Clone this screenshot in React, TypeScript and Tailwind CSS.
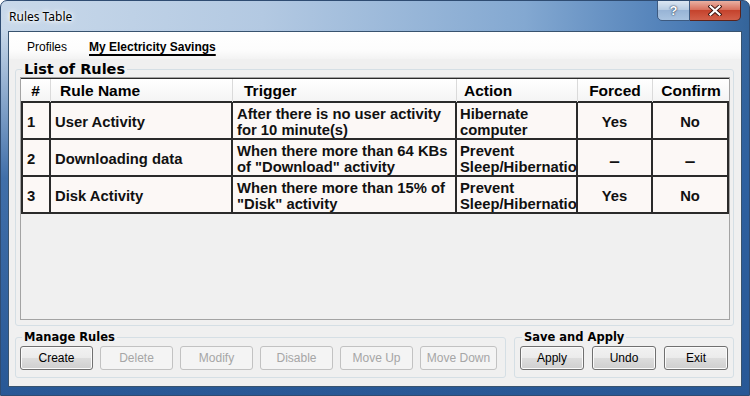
import type { ReactNode } from 'react';

interface Rule {
    id: number;
    name: string;
    trigger: string[];
    action: string[];
    forced: string;
    confirm: string;
}

const rules: Rule[] = [
    { id: 1, name: 'User Activity', trigger: ['After there is no user activity', 'for 10 minute(s)'], action: ['Hibernate', 'computer'], forced: 'Yes', confirm: 'No' },
    { id: 2, name: 'Downloading data', trigger: ['When there more than 64 KBs', 'of "Download" activity'], action: ['Prevent', 'Sleep/Hibernation'], forced: '–', confirm: '–' },
    { id: 3, name: 'Disk Activity', trigger: ['When there more than 15% of', '"Disk" activity'], action: ['Prevent', 'Sleep/Hibernation'], forced: 'Yes', confirm: 'No' },
];

const cols = 'grid grid-cols-[30px_182px_224px_121px_75px_76px]';
const groupLabel = "font-['DejaVu_Sans',sans-serif] font-bold text-black";

function WinButton({ children, disabled, className }: { children: ReactNode; disabled?: boolean; className: string }) {
    return (
        <div
            className={`${className} h-[24px] flex items-center justify-center rounded-[3px] border text-[12px] ${disabled
                ? 'border-[#c2c2c2] bg-[#f4f4f4] text-[#a6a6a6]'
                : 'border-[#707070] bg-[linear-gradient(to_bottom,#f2f2f2_0%,#ebebeb_50%,#dddddd_51%,#cfcfcf_100%)] text-black shadow-[inset_0_0_0_1px_#fbfbfb]'
                }`}
        >
            {children}
        </div>
    );
}

// yes / no / dash cell
function Flag({ value }: { value: string }) {
    if (value === '–') return <span className="text-[19px] leading-none mt-[3px]">–</span>;
    return <span>{value}</span>;
}

export default function App() {
    return (
        <div className="w-[750px] h-[396px] flex flex-col border border-[#2f4c72] rounded-t-[7px] overflow-hidden font-['Liberation_Sans',Arial,sans-serif] bg-[linear-gradient(to_bottom,rgba(42,92,155,0)_7%,rgba(45,96,160,0.88)_45%,#285896_100%),linear-gradient(to_right,#c9d9ea_0%,#b3c9e2_35%,#83a8d1_70%,#4a7bb5_92%,#34649a_100%)]">
            {/* title bar */}
            <div className="h-[30px] flex items-start justify-between">
                <span className="ml-[8px] mt-[8px] text-[12px] leading-[15px] text-black font-['Noto_Sans',sans-serif] [text-shadow:0_0_8px_#fff,0_0_5px_#fff,0_0_3px_#fff]">
                    Rules Table
                </span>
                <div className="flex mr-[8px] -mt-px">
                    <div className="w-[33px] h-[21px] flex items-center justify-center border border-[#3d5a80] rounded-bl-[5px] bg-[linear-gradient(to_bottom,#dbe6f2_0%,#b9cde3_45%,#98b4d6_50%,#a9c3e0_100%)]">
                        <span className="text-[13px] leading-none font-bold text-white [text-shadow:0_0_2px_#243a58,0_0_1px_#243a58]">?</span>
                    </div>
                    <div className="w-[51px] h-[21px] flex items-center justify-center border border-l-0 border-[#5b231b] rounded-br-[5px] bg-[linear-gradient(to_bottom,#e9b0a2_0%,#d8725f_45%,#c5432d_50%,#d2604a_100%)]">
                        <svg width="14" height="11" viewBox="0 0 14 11">
                            <path d="M2.5 1.5 L11.5 9.5 M11.5 1.5 L2.5 9.5" stroke="#3d1510" strokeWidth="4" strokeLinecap="square" fill="none" />
                            <path d="M2.5 1.5 L11.5 9.5 M11.5 1.5 L2.5 9.5" stroke="#ffffff" strokeWidth="2.2" strokeLinecap="square" fill="none" />
                        </svg>
                    </div>
                </div>
            </div>

            {/* client area */}
            <div className="flex-1 mx-[7px] mb-[8px] flex flex-col border border-[#38536f] bg-[#f0f0f0]">
                <div className="h-[27px] flex items-center pl-[18px] gap-[22px] text-[12px] text-black bg-[linear-gradient(to_bottom,#ffffff,#fcfcfc_70%,#f3f3f3)]">
                    <span className="mt-[2px]">Profiles</span>
                    <span className="mt-[2px] font-bold underline underline-offset-[3px] decoration-[1.5px]">My Electricity Savings</span>
                </div>

                <div className="flex flex-col pl-[6px] pr-[7px] pt-[2px]">
                    <fieldset className="border border-[#d5dfe5] rounded-[3px]">
                        <legend className={`ml-[6px] px-[2px] text-[14.5px] leading-[16px] ${groupLabel}`}>List of Rules</legend>
                        <div className="ml-[4px] mr-[3px] mb-[5px] h-[243px] border border-[#a3a3a3] bg-[#f0f0f0]">
                            <div className={`${cols} h-[25px] border-t border-b-2 border-[#2a2a2a] bg-[linear-gradient(to_bottom,#ffffff,#f4f4f4)] text-[15.5px] font-bold text-black`}>
                                <div className="flex items-center justify-center border-r border-[#dadada]">#</div>
                                <div className="flex items-center pl-[9px] border-r border-[#dadada]">Rule Name</div>
                                <div className="flex items-center pl-[11px] border-r border-[#dadada]">Trigger</div>
                                <div className="flex items-center pl-[7px] border-r border-[#dadada]">Action</div>
                                <div className="flex items-center justify-center border-r border-[#dadada]">Forced</div>
                                <div className="flex items-center justify-center">Confirm</div>
                            </div>
                            {rules.map((rule) => (
                                <div key={rule.id} className={`${cols} h-[37px] border-b-2 border-[#2a2a2a] bg-[#fcf8f6] text-[14.8px] leading-[16px] font-bold text-[#111]`}>
                                    <div className="flex items-center pl-[4px] pt-[3px] border-l-2 border-r-2 border-[#2a2a2a]">{rule.id}</div>
                                    <div className="flex items-center pl-[4px] pt-[3px] border-r-2 border-[#2a2a2a]">{rule.name}</div>
                                    <div className="flex flex-col justify-center pl-[4px] pt-[3px] border-r-2 border-[#2a2a2a] overflow-hidden whitespace-nowrap">
                                        {rule.trigger.map((line) => <span key={line}>{line}</span>)}
                                    </div>
                                    <div className="flex flex-col justify-center pl-[3px] pt-[3px] border-r-2 border-[#2a2a2a] overflow-hidden whitespace-nowrap">
                                        {rule.action.map((line) => <span key={line}>{line}</span>)}
                                    </div>
                                    <div className="flex items-center justify-center pt-[3px] border-r-2 border-[#2a2a2a]"><Flag value={rule.forced} /></div>
                                    <div className="flex items-center justify-center pt-[3px] border-r-2 border-[#2a2a2a]"><Flag value={rule.confirm} /></div>
                                </div>
                            ))}
                        </div>
                    </fieldset>

                    <div className="mt-[4px] flex gap-[8px]">
                        <fieldset className="w-[491px] border border-[#d5dfe5] rounded-[3px]">
                            <legend className={`ml-[6px] px-[2px] text-[11.5px] leading-[14px] ${groupLabel}`}>Manage Rules</legend>
                            <div className="flex gap-[7px] pl-[4px] pt-[2px] pb-[7px]">
                                <WinButton className="w-[73px]">Create</WinButton>
                                <WinButton className="w-[73px]" disabled>Delete</WinButton>
                                <WinButton className="w-[73px]" disabled>Modify</WinButton>
                                <WinButton className="w-[73px]" disabled>Disable</WinButton>
                                <WinButton className="w-[73px]" disabled>Move Up</WinButton>
                                <WinButton className="w-[77px]" disabled>Move Down</WinButton>
                            </div>
                        </fieldset>
                        <fieldset className="w-[220px] border border-[#d5dfe5] rounded-[3px]">
                            <legend className={`ml-[7px] px-[2px] text-[11.5px] leading-[14px] ${groupLabel}`}>Save and Apply</legend>
                            <div className="flex gap-[8px] pl-[5px] pt-[2px] pb-[7px]">
                                <WinButton className="w-[64px]">Apply</WinButton>
                                <WinButton className="w-[64px]">Undo</WinButton>
                                <WinButton className="w-[64px]">Exit</WinButton>
                            </div>
                        </fieldset>
                    </div>
                </div>
            </div>
        </div>
    );
}
